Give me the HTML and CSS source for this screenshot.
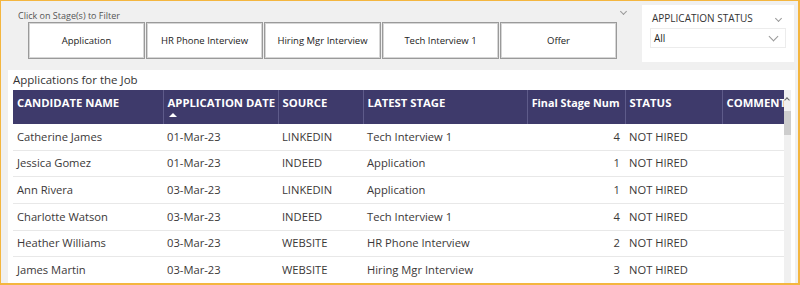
FILE: index.html
```html
<!DOCTYPE html>
<html lang="en">
<head>
    <meta charset="UTF-8">
    <title>Applications for the Job</title>
    <link rel="stylesheet" href="styles.css">
</head>
<body>
    <div class="frame">
        <div class="top">
            <div class="stage-filter">
                <div class="filter-label">Click on Stage(s) to Filter</div>
                <div class="stage-buttons">
                    <div class="stage-btn">Application</div>
                    <div class="stage-btn">HR Phone Interview</div>
                    <div class="stage-btn">Hiring Mgr Interview</div>
                    <div class="stage-btn">Tech Interview 1</div>
                    <div class="stage-btn">Offer</div>
                </div>
                <span class="chev chev-filter"></span>
            </div>
            <div class="status-panel">
                <div class="status-title">
                    <span>APPLICATION STATUS</span>
                    <span class="chev"></span>
                </div>
                <div class="status-select">
                    <span>All</span>
                    <span class="chev chev-big"></span>
                </div>
            </div>
        </div>

        <div class="table-panel">
            <div class="table-title">Applications for the Job</div>
            <div class="table-wrap">
                <table class="grid">
                    <colgroup>
                        <col style="width:150px">
                        <col style="width:115px">
                        <col style="width:85px">
                        <col style="width:164px">
                        <col style="width:98px">
                        <col style="width:97px">
                        <col style="width:62px">
                    </colgroup>
                    <thead>
                        <tr>
                            <th>CANDIDATE NAME</th>
                            <th>APPLICATION DATE<span class="sort-up"></span></th>
                            <th>SOURCE</th>
                            <th>LATEST STAGE</th>
                            <th class="num">Final Stage Num</th>
                            <th>STATUS</th>
                            <th>COMMENTS</th>
                        </tr>
                    </thead>
                    <tbody>
                        <tr><td>Catherine James</td><td>01-Mar-23</td><td>LINKEDIN</td><td>Tech Interview 1</td><td class="num">4</td><td>NOT HIRED</td><td></td></tr>
                        <tr><td>Jessica Gomez</td><td>01-Mar-23</td><td>INDEED</td><td>Application</td><td class="num">1</td><td>NOT HIRED</td><td></td></tr>
                        <tr><td>Ann Rivera</td><td>03-Mar-23</td><td>LINKEDIN</td><td>Application</td><td class="num">1</td><td>NOT HIRED</td><td></td></tr>
                        <tr><td>Charlotte Watson</td><td>03-Mar-23</td><td>INDEED</td><td>Tech Interview 1</td><td class="num">4</td><td>NOT HIRED</td><td></td></tr>
                        <tr><td>Heather Williams</td><td>03-Mar-23</td><td>WEBSITE</td><td>HR Phone Interview</td><td class="num">2</td><td>NOT HIRED</td><td></td></tr>
                        <tr><td>James Martin</td><td>03-Mar-23</td><td>WEBSITE</td><td>Hiring Mgr Interview</td><td class="num">3</td><td>NOT HIRED</td><td></td></tr>
                    </tbody>
                </table>
                <div class="scrollbar">
                    <span class="scroll-arrow"></span>
                    <span class="scroll-thumb"></span>
                </div>
            </div>
        </div>
    </div>
</body>
</html>
```

FILE: styles.css
```css
body {
    margin: 0;
    font-family: 'Open Sans', 'Liberation Sans', sans-serif;
    color: #333;
}
.frame {
    box-sizing: border-box;
    width: 800px;
    height: 285px;
    border: 1px solid #f4b63f;
    border-width: 1px 2px 2px 1px;
    background: #f0f0f0;
    overflow: hidden;
}
.top {
    display: flex;
    height: 69px;
}
.stage-filter {
    position: relative;
    width: 641px;
}
.filter-label {
    font-size: 9px;
    color: #555;
    margin: 8px 0 0 17px;
    height: 13px;
    line-height: 13px;
}
.stage-buttons {
    display: flex;
    gap: 1px;
    margin-left: 27px;
}
.stage-btn {
    box-sizing: border-box;
    width: 117px;
    height: 37px;
    background: #fff;
    border: 1px solid #9a9a9a;
    box-shadow: inset 0 0 0 1px #d6d6d6;
    display: flex;
    align-items: center;
    justify-content: center;
    font-size: 9.5px;
    color: #222;
}
.chev {
    display: inline-block;
    width: 4px;
    height: 4px;
    border-right: 1px solid #999;
    border-bottom: 1px solid #999;
    transform: rotate(45deg);
}
.chev-filter {
    position: absolute;
    left: 620px;
    top: 8px;
}
.status-panel {
    box-sizing: border-box;
    width: 152px;
    height: 57px;
    margin-top: 4px;
    background: #fff;
    padding: 6px 8px 0 8px;
}
.status-title {
    display: flex;
    justify-content: space-between;
    align-items: center;
    font-size: 10px;
    color: #333;
    padding: 0 5px 0 2px;
    height: 14px;
}
.status-select {
    box-sizing: border-box;
    margin-top: 3px;
    height: 20px;
    border: 1px solid #ececec;
    display: flex;
    justify-content: space-between;
    align-items: center;
    padding: 0 8px 0 3px;
    font-size: 10px;
    color: #222;
}
.chev-big {
    width: 6px;
    height: 6px;
    margin-top: -4px;
}
.table-panel {
    box-sizing: border-box;
    width: 787px;
    height: 214px;
    margin-left: 7px;
    background: #fff;
    padding-left: 5px;
}
.table-title {
    height: 20px;
    line-height: 20px;
    font-size: 11.5px;
    color: #333;
}
.table-wrap {
    display: flex;
}
.grid {
    border-collapse: collapse;
    table-layout: fixed;
    width: 771px;
    font-size: 11.2px;
}
.grid th {
    position: relative;
    background: #3e3a6b;
    color: #fff;
    font-weight: 700;
    font-size: 11.3px;
    text-align: left;
    vertical-align: top;
    height: 34px;
    padding: 5px 4px 0 4px;
    box-sizing: border-box;
    border-left: 1px solid #5e5b8a;
    white-space: nowrap;
    overflow: hidden;
}
.grid th:first-child {
    border-left: none;
}
.grid th.num {
    font-size: 10.8px;
}
.grid td {
    height: 24.5px;
    line-height: 14px;
    padding: 0 4px;
    border-bottom: 1px solid #e8e8e8;
    white-space: nowrap;
    overflow: hidden;
    color: #3b3838;
}
.grid .num {
    text-align: right;
    padding-right: 5px;
}
.sort-up {
    position: absolute;
    left: 5px;
    top: 23px;
    width: 0;
    height: 0;
    border-left: 4px solid transparent;
    border-right: 4px solid transparent;
    border-bottom: 4px solid #fff;
}
.scrollbar {
    position: relative;
    width: 7px;
    height: 194px;
    background: #f0f0f0;
}
.scroll-arrow {
    position: absolute;
    left: 1px;
    top: 8px;
    width: 3px;
    height: 3px;
    border-left: 1px solid #666;
    border-top: 1px solid #666;
    transform: rotate(45deg);
}
.scroll-thumb {
    position: absolute;
    left: 0;
    top: 21px;
    width: 7px;
    height: 24px;
    background: #cdcdcd;
}
```
